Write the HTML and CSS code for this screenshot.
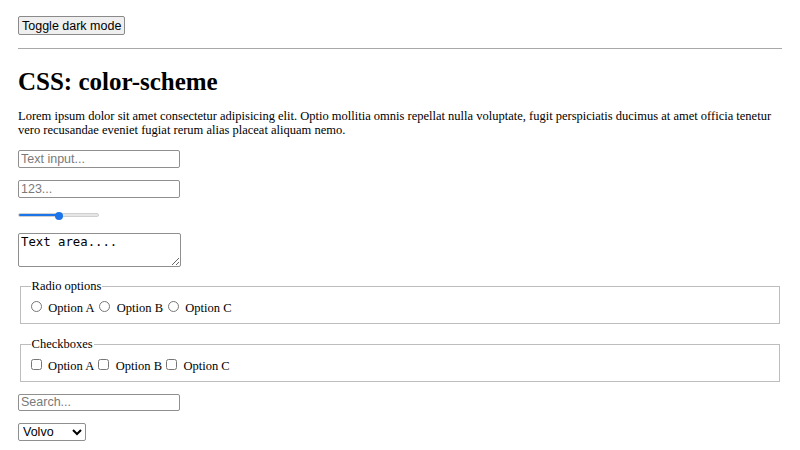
FILE: index.html
```html
<!DOCTYPE html>
<html>
<head>
<meta charset="utf-8">
<link rel="stylesheet" href="styles.css">
</head>
<body class="page">
<div class="bar"><button class="toggle">Toggle dark mode</button></div>
<hr class="rule">
<h1 class="title">CSS: color-scheme</h1>
<p class="intro">Lorem ipsum dolor sit amet consectetur adipisicing elit. Optio mollitia omnis repellat nulla voluptate, fugit perspiciatis ducimus at amet officia tenetur vero recusandae eveniet fugiat rerum alias placeat aliquam nemo.</p>
<div class="row"><input class="field" type="text" placeholder="Text input..."></div>
<div class="row"><input class="field" type="number" placeholder="123..."></div>
<div class="row"><input class="range" type="range" value="50" style="--fill: 50%"></div>
<div class="row"><textarea class="area">Text area....</textarea></div>
<fieldset class="group">
<legend class="legend">Radio options</legend>
<div class="line"><input class="choice radio" type="radio" name="r" id="ra"> <label for="ra">Option A</label><input class="choice radio" type="radio" name="r" id="rb"> <label for="rb">Option B</label><input class="choice radio" type="radio" name="r" id="rc"> <label for="rc">Option C</label></div>
</fieldset>
<fieldset class="group group-tight">
<legend class="legend">Checkboxes</legend>
<div class="line"><input class="choice check" type="checkbox" id="ca"> <label for="ca">Option A</label><input class="choice check" type="checkbox" id="cb"> <label for="cb">Option B</label><input class="choice check" type="checkbox" id="cc"> <label for="cc">Option C</label></div>
</fieldset>
<div class="row"><input class="field" type="search" placeholder="Search..."></div>
<div class="row"><select class="pick"><option>Volvo</option><option>Saab</option><option>Mercedes</option></select></div>
</body>
</html>
```
FILE: styles.css
```css
html { background: #fff; }
.page {
  margin: 0;
  padding: 16px 18px;
  font-family: "Liberation Serif", "Times New Roman", serif;
  font-size: 12.5px;
  color: #000;
}
.bar { height: 19px; }
.toggle {
  display: block;
  box-sizing: border-box;
  height: 19px;
  padding: 0 3px;
  font-family: "Liberation Sans", Arial, sans-serif;
  font-size: 12.5px;
  color: #000;
  background: #efefef;
  border: 1px solid #8a8a8a;
  border-radius: 2px;
}
.rule {
  margin: 13px 0 0;
  height: 0;
  border: 0;
  border-top: 1px solid #a8a8a8;
}
.title {
  margin: 19px 0 12.5px;
  font-size: 25px;
  line-height: normal;
}
.intro {
  margin: 0 0 12.5px;
  line-height: 14.7px;
}
.row { margin: 0 0 12px; }
.field {
  display: block;
  box-sizing: border-box;
  width: 162px;
  height: 17.6px;
  padding: 0 2px;
  font-family: "Liberation Sans", Arial, sans-serif;
  font-size: 12.5px;
  border: 1px solid #8f8f8f;
  border-radius: 2px;
  background: #fff;
}
.field::placeholder { color: #7a7a7a; }
.range {
  display: block;
  -webkit-appearance: none;
  appearance: none;
  width: 81px;
  height: 11px;
  margin: 0;
  background: transparent;
}
.range::-webkit-slider-runnable-track {
  height: 4px;
  border-radius: 2px;
  background: linear-gradient(to right, #1b74e8 var(--fill), #e6e6e6 var(--fill));
  border: 0.5px solid #cfcfcf;
}
.range::-webkit-slider-thumb {
  -webkit-appearance: none;
  width: 8px;
  height: 8px;
  margin-top: -2px;
  border-radius: 50%;
  background: #1b74e8;
  border: 0;
}
.area {
  display: block;
  box-sizing: border-box;
  width: 163px;
  height: 34px;
  padding: 1px 2px;
  font-family: "DejaVu Sans Mono", monospace;
  font-size: 12.3px;
  border: 1px solid #8f8f8f;
  border-radius: 2px;
}
.group {
  margin: 0 1.6px 13px;
  padding: 4px 10px 7.5px;
  border: 1px solid #bdbdbd;
}
.group-tight {
  margin-bottom: 12px;
  padding-bottom: 6.5px;
}
.legend { padding: 0 1px; }
.line { line-height: normal; }
.choice {
  width: 11px;
  height: 11px;
  vertical-align: baseline;
}
.radio { margin: 3px 3.6px 0 4.6px; }
.check { margin: 3px 3.4px 2.4px 4px; }
.choice:first-child { margin-left: 0; }
.pick {
  display: block;
  box-sizing: border-box;
  width: 68px;
  height: 17.6px;
  padding: 0;
  font-family: "Liberation Sans", Arial, sans-serif;
  font-size: 12.5px;
  border: 1px solid #8f8f8f;
  border-radius: 2px;
  background: #fff;
  color: #000;
}
```
